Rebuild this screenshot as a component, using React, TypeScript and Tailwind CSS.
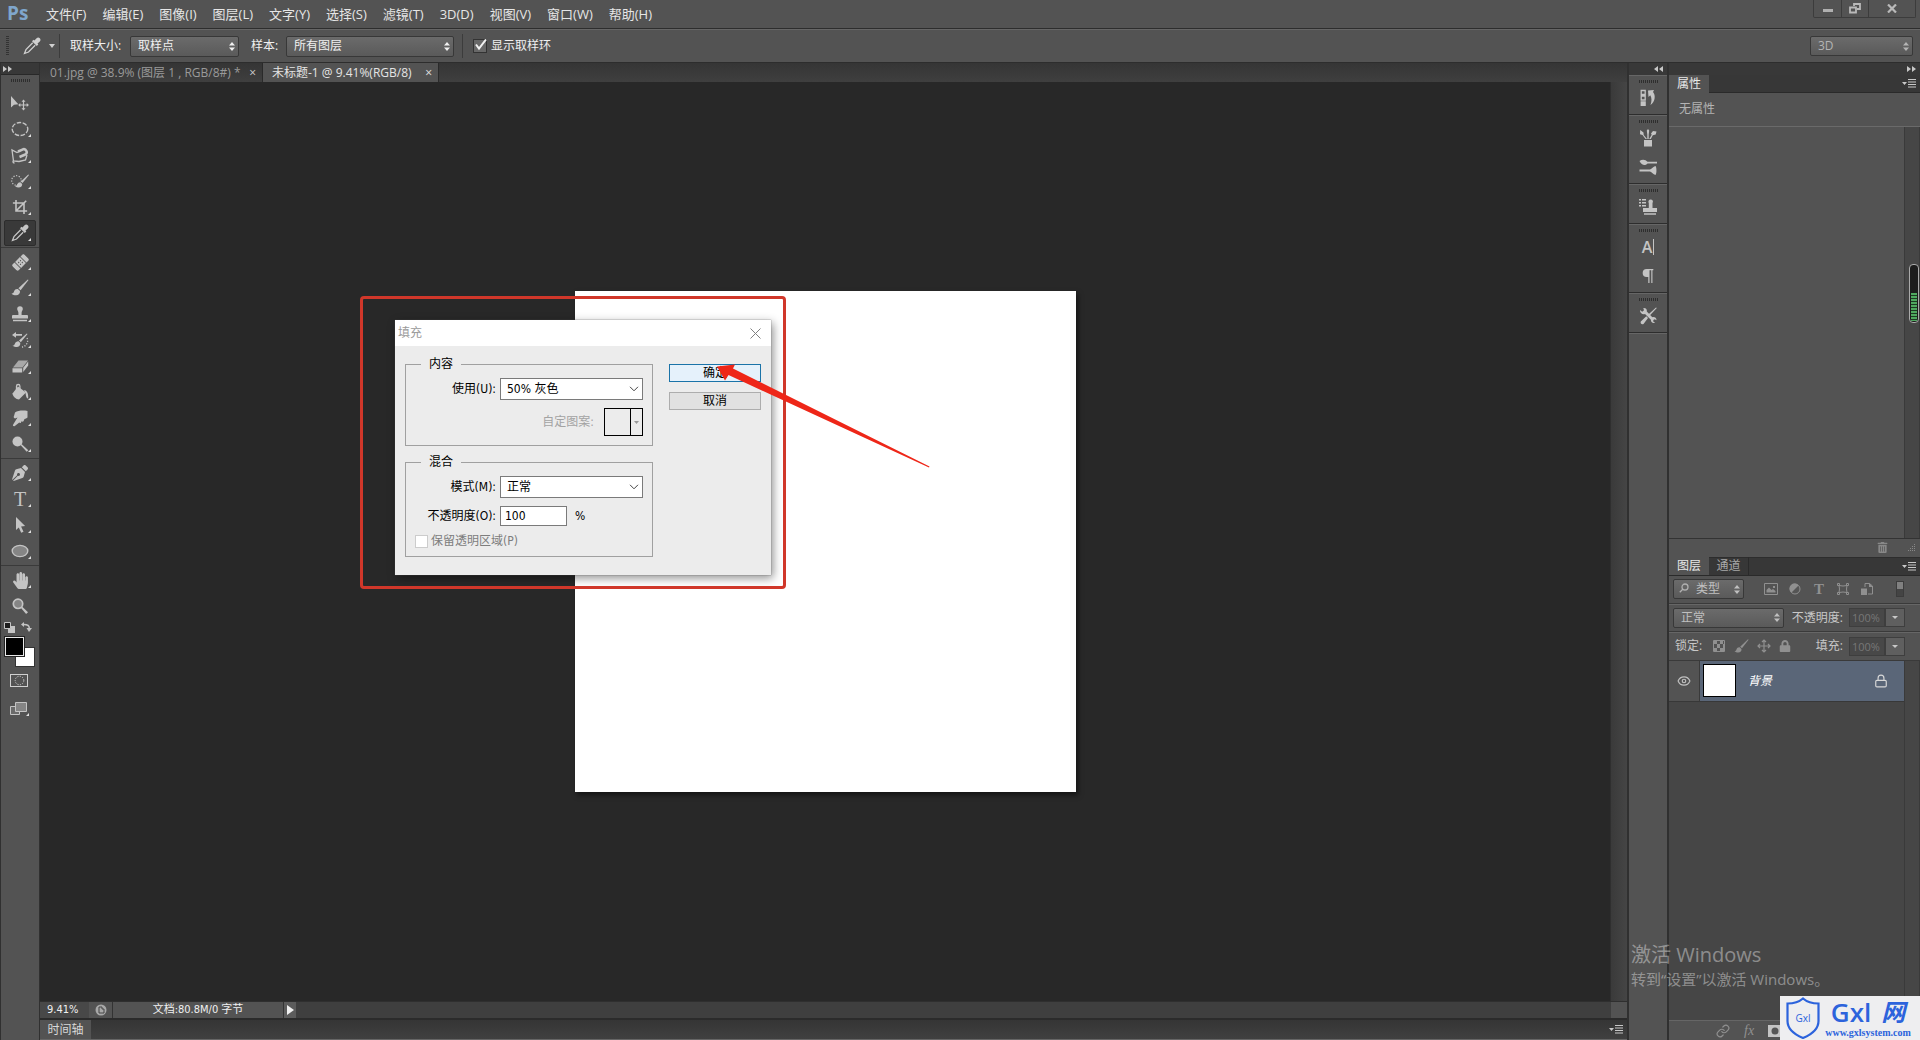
import React from "react";
import clsx from "clsx";
import { FaBandAid, FaHandPaper, FaLock, FaPenNib, FaTrashAlt } from "react-icons/fa";
import { LuEye, LuLink, LuLock } from "react-icons/lu";

const menus = [
  "文件(F)",
  "编辑(E)",
  "图像(I)",
  "图层(L)",
  "文字(Y)",
  "选择(S)",
  "滤镜(T)",
  "3D(D)",
  "视图(V)",
  "窗口(W)",
  "帮助(H)",
];

const Svg = ({ size = 18, children }: { size?: number; children: React.ReactNode }) => (
  <svg width={size} height={size} viewBox="0 0 18 18" fill="currentColor" stroke="none" aria-hidden="true">
    {children}
  </svg>
);

const BrushShape = () => (
  <>
    <path d="M17.5 1 9.6 11.2 7.4 9.3 16.8.4z" />
    <path d="M6.8 10 9 12c.3 2.6-1.500 4.300-3.800 4.300-1.900 0-3.300-.6-4.700-1.600 2-.2 2.200-1.300 2.700-2.600.6-1.500 1.900-2.500 3.600-2.100z" />
  </>
);

const StampShape = () => (
  <path d="M9 1.200a2.800 2.800 0 0 1 2.800 2.800c0 1.500-1.200 2.200-1.200 3.800V10H16a1 1 0 0 1 1 1v2.500H1V11a1 1 0 0 1 1-1h5.400V7.800C7.400 6.200 6.200 5.500 6.200 4A2.800 2.800 0 0 1 9 1.200zM2 14.800h14v1.500H2z" />
);

const DropperShape = () => (
  <>
    <path d="M16.800 1.200c1 1 .9 2.300 0 3.200l-2.300 2.200.8.900-1.500 1.500L9 4.200l1.500-1.500.9.800 2.200-2.300c.9-.9 2.200-1 3.200 0z" />
    <path d="M9.700 5.800 3 12.500 1.500 16.500 5.500 15 12.200 8.300" fill="none" stroke="currentColor" strokeWidth="1.300" />
  </>
);

const icons = {
  move: (
    <Svg>
      <path d="M0 2v11.500l3-2.700 4.300-.6z" />
      <path d="M12.500 5.500l2 2.200h-1.400v2.700h2.600V9l2.200 2-2.200 2.100v-1.500h-2.600v2.700h1.400l-2 2.200-2-2.200h1.400v-2.700H9.300v1.500L7.200 11l2.100-2v1.400h2.600V7.700h-1.400z" />
    </Svg>
  ),
  marquee: (
    <Svg>
      <ellipse cx="9" cy="9" rx="7.800" ry="6.500" fill="none" stroke="currentColor" strokeWidth="1.400" strokeDasharray="4.500 1.500" />
    </Svg>
  ),
  lasso: (
    <Svg>
      <path d="M8 15.500l-5.500-.5L1 4l5 2.500L9 5M16 9l-1.500 5-6.500 1.500" fill="none" stroke="currentColor" strokeWidth="1.300" />
      <path d="M3 14.500c-1.500.5-1.500 2.500.5 2.500" fill="none" stroke="currentColor" strokeWidth="1.300" />
      <path d="M7 5.500 12 3.300c3-1 5.300 3.700 2.300 5.200L8.500 11" fill="none" stroke="currentColor" strokeWidth="2.500" />
    </Svg>
  ),
  quick: (
    <Svg>
      <circle cx="5.500" cy="8.500" r="4.800" fill="none" stroke="currentColor" strokeWidth="1.200" strokeDasharray="1.200 1.500" />
      <path d="M18 3 11.500 11 9.800 9.500 17.300 2.400z" />
      <path d="M9.300 10.200 11.200 12c.2 2.400-1.700 3.500-3.500 3.500-1.300 0-2.500-.4-3.700-1.200 1.400-.2 1.800-1 2.300-2 .6-1.300 1.600-2.200 3-2.100z" />
    </Svg>
  ),
  crop: (
    <Svg size={16}>
      <path d="M4.500 1v12.500H17M1 4.500h12.500V17M5 13 16 2" fill="none" stroke="currentColor" strokeWidth="1.800" />
    </Svg>
  ),
  dropper: (
    <Svg>
      <DropperShape />
    </Svg>
  ),
  heal: <FaBandAid className="size-[17px] -rotate-45" />,
  brush: (
    <Svg>
      <BrushShape />
    </Svg>
  ),
  stamp: (
    <Svg>
      <StampShape />
    </Svg>
  ),
  history: (
    <Svg>
      <path d="M16.500 3 9.800 11.200 8 9.600 15.800 2.400z" />
      <path d="M7.500 10.200 9.300 12c.2 2.400-1.500 4-3.500 4-1.500 0-3-.4-4.300-1.300 1.700-.2 2-1.300 2.500-2.300.6-1.300 1.900-2.400 3.500-2.200z" />
      <path d="M1 4l4-3v2h6v1.800H5v2z" />
      <path d="M16 7c2 4-1 8.500-5 9" fill="none" stroke="currentColor" strokeWidth="1.300" strokeDasharray="1.200 1.500" />
    </Svg>
  ),
  eraser: (
    <Svg>
      <path d="M7.500 3.500h9.500l-5.500 7H2z" opacity=".75" />
      <path d="M1.500 11.300h9.700v4.200H1.500zM12.200 10.800 17.200 4.500v4l-5 6.500z" />
    </Svg>
  ),
  bucket: (
    <Svg>
      <path d="M7 3.500 15 9.500 8 16.500C5 16.500 1.500 13 1.500 10.500z" />
      <path d="M5.500 8.500V3.200a1.700 1.700 0 0 1 3.400 0V8" fill="none" stroke="currentColor" strokeWidth="1.300" />
      <path d="M13 7c3 .5 4.500 3 4.200 8.500-1.800 0-2.200-2-2.700-5.500z" />
    </Svg>
  ),
  smudge: (
    <Svg>
      <path d="M4 3.500C7 1.500 12 1 16.500 2v6.500c-1 .8-1.900 1.200-3 1.400l-1 2.400c-.7.500-1.500.5-2 0l-.6 1.400c-.7.500-1.300.3-1.600-.2L3.800 17c-1.400.6-2.400-.5-1.600-1.600L6.500 8.500 4 9.500C2.800 9.200 2.300 8 3 7z" />
    </Svg>
  ),
  dodge: (
    <Svg>
      <circle cx="6.500" cy="6.500" r="5" />
      <path d="m9.500 10 1-1 6.800 6.200-1.600 1.600z" />
    </Svg>
  ),
  pen: <FaPenNib className="size-4" />,
  type: <span className="font-['Liberation_Serif',serif] text-[20px] leading-5">T</span>,
  arrow: (
    <Svg>
      <path d="M5 1v13l2.800-2.500 2.400 5.200 2.300-1-2.400-5.200 4-.6z" />
    </Svg>
  ),
  ellipse: (
    <Svg>
      <ellipse cx="9" cy="9" rx="7.800" ry="5.600" fill="#858585" stroke="currentColor" strokeWidth="1.400" />
    </Svg>
  ),
  hand: <FaHandPaper className="size-[17px]" />,
  zoom: (
    <Svg>
      <circle cx="7" cy="6.800" r="4.700" fill="#858585" stroke="currentColor" strokeWidth="1.700" />
      <path d="m10 11 1.300-1.300 5.700 5.500-1.900 1.900z" />
    </Svg>
  ),
};

type Tool = { id: keyof typeof icons; label: string; flyout?: boolean };

const toolGroups: Tool[][] = [
  [
    { id: "move", label: "移动工具" },
    { id: "marquee", label: "椭圆选框工具", flyout: true },
    { id: "lasso", label: "磁性套索工具", flyout: true },
    { id: "quick", label: "快速选择工具", flyout: true },
    { id: "crop", label: "裁剪工具", flyout: true },
    { id: "dropper", label: "吸管工具", flyout: true },
  ],
  [
    { id: "heal", label: "污点修复画笔工具", flyout: true },
    { id: "brush", label: "画笔工具", flyout: true },
    { id: "stamp", label: "仿制图章工具", flyout: true },
    { id: "history", label: "历史记录画笔工具", flyout: true },
    { id: "eraser", label: "橡皮擦工具", flyout: true },
    { id: "bucket", label: "油漆桶工具", flyout: true },
    { id: "smudge", label: "涂抹工具", flyout: true },
    { id: "dodge", label: "减淡工具", flyout: true },
  ],
  [
    { id: "pen", label: "钢笔工具", flyout: true },
    { id: "type", label: "横排文字工具", flyout: true },
    { id: "arrow", label: "路径选择工具", flyout: true },
    { id: "ellipse", label: "椭圆工具", flyout: true },
  ],
  [
    { id: "hand", label: "抓手工具", flyout: true },
    { id: "zoom", label: "缩放工具" },
  ],
];

const dockGroups = [
  [
    {
      label: "历史记录",
      icon: (
        <Svg>
          <path d="M2.200 1.500h4v4h-4zM2.200 7h4v4h-4z" fill="none" stroke="currentColor" strokeWidth="1.300" />
          <path d="M1.600 12.200h5.200V17H1.600zM9 1.500l6-.5-1 2c3 3.500 2 10-2.500 13 1.500-4 1.200-7.500-.2-9.700L9.500 8z" />
        </Svg>
      ),
    },
  ],
  [
    {
      label: "画笔",
      icon: (
        <Svg>
          <path d="M5 11h8v6.500H5zM8.300 10V5.500L7.800 1.500 9 0l1.200 1.500-.5 4V10zM6.500 10 3.500 6 1 5.200 1.200 1l3.300 2.500L4.700 6 8 10zM10.200 10l2.500-4.300L12 4.500 14 2l3.500.5-.8 3-2.900.8L11.800 10z" />
        </Svg>
      ),
    },
    {
      label: "画笔预设",
      icon: (
        <Svg>
          <path d="M.5 3C3 1 6.500 1.200 8.500 3.700H18v1.800H8.500C6.500 8 2.500 7.500.5 3zM.5 11.500H11c2-.5 3-3 5.500-3.500 1.300 1.500 1.300 7.500 0 9-2.500-.5-3.500-3-5.500-3.500H.5z" />
        </Svg>
      ),
    },
  ],
  [
    {
      label: "仿制源",
      icon: (
        <Svg>
          <path d="M0 1h2v1.500H0zM3 1h4v1.500H3zM0 4h2v1.500H0zM3 4h4v1.500H3zM0 7h2v1.500H0zM3 7h4v1.500H3zM11.500 1.500a2.200 2.200 0 0 1 2 3.500V10H18v4H4v-4h5.800V5a2.200 2.200 0 0 1 1.700-3.500zM5 15.300h12v1.400H5z" />
        </Svg>
      ),
    },
  ],
  [
    {
      label: "字符",
      icon: (
        <span className="flex items-center gap-px">
          <span className="text-[16px] font-semibold leading-4">A</span>
          <span className="h-4 w-px bg-[#c4c4c4]" />
        </span>
      ),
    },
    {
      label: "段落",
      icon: (
        <Svg size={16}>
          <path d="M7.500 1H15v1.500h-1V17h-1.300V2.500h-2V17H9.300v-7H7.500a4.500 4.500 0 0 1 0-9z" />
        </Svg>
      ),
    },
  ],
  [
    {
      label: "工具预设",
      icon: (
        <Svg>
          <path d="M1 3l2.200 1.700L5 3.200 4.300 1c2.500-.3 4 1.300 3.500 3.500l5.500 5.700c2.300-.6 4.200.8 4.200 3l-1.700-1-1.500.8.100 1.800 1.700.9c-2.300 1-4.500-.5-4.200-2.900L6 7C3.500 7.800.7 6 1 3z" />
          <path d="M17.800 1 9.800 9.500 8.500 8.200 17 .4zM7.300 9.200l1.700 1.700-4.500 6c-1.700 1-3.500-.8-2.700-2.500z" />
        </Svg>
      ),
    },
  ],
];

const DoubleArrow = ({ left }: { left?: boolean }) => (
  <svg width="9" height="6" viewBox="0 0 9 6" fill="#c8c8c8" className={left ? "rotate-180" : ""} aria-hidden="true">
    <path d="M0 0l4 3-4 3zM5 0l4 3-4 3z" />
  </svg>
);

const UpDown = () => (
  <svg width="6" height="9" viewBox="0 0 6 9" fill="currentColor" aria-hidden="true">
    <path d="M3 0l3 3.500H0zM3 9l3-3.500H0z" />
  </svg>
);

const PanelMenu = () => (
  <button type="button" aria-label="面板菜单" className="flex items-center text-[#c8c8c8]">
    <svg width="14" height="9" viewBox="0 0 14 9" fill="currentColor" aria-hidden="true">
      <path d="M0 3h5L2.500 6zM6 0h8v1H6zM6 2.500h8v1H6zM6 5h8v1H6zM6 7.500h8v1H6z" />
    </svg>
  </button>
);

const Grip = () => (
  <div className="flex h-[3px] gap-px" aria-hidden="true">
    {Array.from({ length: 10 }, (_, i) => (
      <span key={i} className="w-px bg-[#2e2e2e]" />
    ))}
  </div>
);

type SelectProps = {
  id: string;
  label?: string;
  options: string[];
  className?: string;
  pad?: string;
};

// dark bevelled drop-down used by the options bar and the panels
const DarkSelect = ({ id, label, options, className, pad = "pl-[7px]" }: SelectProps) => (
  <div className={clsx("relative", className)}>
    <select
      id={id}
      aria-label={label}
      className={clsx(
        "h-full w-full appearance-none rounded-xs border border-[#383838] bg-linear-to-b from-[#6b6b6b] to-[#5a5a5a] pr-4 text-[12px] leading-4 outline-none",
        pad
      )}
    >
      {options.map((o) => (
        <option key={o}>{o}</option>
      ))}
    </select>
    <span className="pointer-events-none absolute inset-y-0 right-1 flex items-center">
      <UpDown />
    </span>
  </div>
);

const LightSelect = ({ id, options }: SelectProps) => (
  <div className="relative h-[22px] w-[143px]">
    <select
      id={id}
      className="h-full w-full appearance-none border border-[#7a7a7a] bg-white pl-1.5 pr-5 text-[12px] leading-4 text-black outline-none"
    >
      {options.map((o) => (
        <option key={o}>{o}</option>
      ))}
    </select>
    <svg
      width="10"
      height="6"
      viewBox="0 0 10 6"
      fill="none"
      stroke="#444"
      className="pointer-events-none absolute right-1 top-2"
      aria-hidden="true"
    >
      <path d="M1 .8l4 4 4-4" />
    </svg>
  </div>
);

const MenuBar = () => (
  <header className="flex h-[29px] shrink-0 items-start border-b border-[#2d2d2d] bg-[#535353]">
    <span className="w-[38px] pl-[7px] text-[19px] font-bold leading-[26px] text-[#7fa6cc]">Ps</span>
    <nav className="flex">
      {menus.map((m) => (
        <button key={m} type="button" className="px-2 text-[13px] leading-7 text-[#e6e6e6]">
          {m}
        </button>
      ))}
    </nav>
    <div className="ml-auto mr-1 flex h-[18px] divide-x divide-[#3c3c3c] rounded-b-xs border border-t-0 border-[#3c3c3c] text-[#b9b9b9]">
      <button type="button" aria-label="最小化" className="flex w-7 items-center justify-center">
        <span className="mt-1 h-[3px] w-2.5 bg-[#b0b0b0]" />
      </button>
      <button type="button" aria-label="还原" className="flex w-[27px] items-center justify-center">
        <svg width="12" height="11" viewBox="0 0 12 11" fill="none" stroke="currentColor" strokeWidth="1.800" aria-hidden="true">
          <path d="M5 3V1h6v5H8M1 4.500h6v5H1z" />
        </svg>
      </button>
      <button type="button" aria-label="关闭" className="flex w-[46px] items-center justify-center">
        <svg width="10" height="9" viewBox="0 0 10 9" fill="none" stroke="currentColor" strokeWidth="2.200" aria-hidden="true">
          <path d="M1 .5l8 8M9 .5l-8 8" />
        </svg>
      </button>
    </div>
  </header>
);

const OptionsBar = () => (
  <div className="flex h-[34px] shrink-0 items-center border-b border-t border-b-[#2d2d2d] border-t-[#666] bg-[#535353] text-[12px] text-[#f0f0f0]">
    <div className="ml-1.5 h-5 w-[3px] bg-[repeating-linear-gradient(#333_0_1px,transparent_1px_2px)]" />
    <button type="button" aria-label="吸管工具" className="ml-3.5 flex w-9 items-center gap-2 text-[#d0d0d0]">
      <Svg>
        <DropperShape />
      </Svg>
      <svg width="6" height="4" viewBox="0 0 6 4" fill="currentColor" aria-hidden="true">
        <path d="M0 0h6L3 4z" />
      </svg>
    </button>
    <div className="h-6 w-px bg-[#3c3c3c]" />
    <label htmlFor="sample-size" className="ml-2.5 w-[60px]">
      取样大小:
    </label>
    <DarkSelect id="sample-size" options={["取样点", "3 x 3 平均"]} className="h-[21px] w-[109px]" />
    <label htmlFor="sample-layers" className="ml-3 w-[35px]">
      样本:
    </label>
    <DarkSelect id="sample-layers" options={["所有图层", "当前图层"]} className="h-[21px] w-[168px]" />
    <div className="ml-2 h-6 w-px bg-[#3c3c3c]" />
    <label className="ml-2.5 flex items-center gap-1">
      <span className="relative size-3.5">
        <input
          type="checkbox"
          defaultChecked
          className="peer block size-3.5 appearance-none border border-[#333] bg-[#686868]"
        />
        <svg
          width="14"
          height="14"
          viewBox="0 0 14 14"
          fill="none"
          stroke="#f2f2f2"
          strokeWidth="2"
          className="pointer-events-none absolute inset-0 hidden peer-checked:block"
          aria-hidden="true"
        >
          <path d="M3 5.500 6 9.500 13 .5" />
        </svg>
      </span>
      显示取样环
    </label>
    <DarkSelect
      id="workspace"
      label="工作区"
      options={["3D", "基本功能"]}
      className="ml-auto mr-[7px] h-5 w-[103px] text-[#b4b4b4]"
    />
  </div>
);

const ToolBar = () => (
  <aside className="w-10 shrink-0 border-x border-[#303030] bg-[#535353] text-[#c4c4c4]">
    <div className="flex h-3 items-center border-b border-[#282828] bg-[#383838] pl-0.5">
      <DoubleArrow />
    </div>
    <div className="flex h-[15px] items-start justify-center pt-1">
      <Grip />
    </div>
    {toolGroups.map((group, i) => (
      <div key={i} className={clsx("flex flex-col items-center", i > 0 && "mt-px border-t border-[#3a3a3a] pt-px")}>
        {group.map((t) => (
          <button
            key={t.id}
            type="button"
            aria-label={t.label}
            className={clsx(
              "relative flex h-[26px] w-8 items-center justify-center border",
              t.id === "dropper" ? "rounded-xs border-[#2c2c2c] bg-[#393939]" : "border-transparent"
            )}
          >
            {icons[t.id]}
            {t.flyout && (
              <svg width="3" height="3" viewBox="0 0 3 3" fill="#e0e0e0" className="absolute bottom-1 right-1" aria-hidden="true">
                <path d="M3 0v3H0z" />
              </svg>
            )}
          </button>
        ))}
      </div>
    ))}
    <div className="flex h-4 items-center gap-1.5 pl-[3px]">
      <button type="button" aria-label="默认颜色">
        <svg width="11" height="11" viewBox="0 0 11 11" aria-hidden="true">
          <path d="M4 4h7v7H4z" fill="#c4c4c4" />
          <path d="M.5.5h6v6h-6z" fill="#1c1c1c" stroke="#c4c4c4" />
        </svg>
      </button>
      <button type="button" aria-label="切换颜色">
        <svg width="12" height="10" viewBox="0 0 12 10" fill="currentColor" aria-hidden="true">
          <path d="M3 0v1.800c4 0 6 1.500 6 4.200h2L8 10 5.500 6H7.500C7.500 4.300 6 3.300 3 3.300V5L0 2.500z" />
        </svg>
      </button>
    </div>
    <div className="relative mt-0.5 h-[29px]">
      <button type="button" aria-label="背景色" className="absolute left-3.5 top-2.5 size-5 border border-[#333] bg-white" />
      <button type="button" aria-label="前景色" className="absolute left-1 top-0 size-[19px] border border-[#e8e8e8] bg-black outline-1 outline-[#222]" />
    </div>
    <div className="flex flex-col items-center pr-0.5">
      <button type="button" aria-label="快速蒙版" className="mt-2 flex h-[13px] w-[18px] items-center justify-center border border-[#d0d0d0]">
        <svg width="11" height="11" viewBox="0 0 11 11" fill="none" stroke="#d0d0d0" strokeDasharray="1.200 1.300" aria-hidden="true">
          <circle cx="5.500" cy="5.500" r="4.300" />
        </svg>
      </button>
      <button type="button" aria-label="屏幕模式" className="relative mt-3.5">
        <svg width="20" height="15" viewBox="0 0 20 15" stroke="#c4c4c4" fill="#6a6a6a" aria-hidden="true">
          <path d="M1.500 5.500h9v8h-9z" />
          <path d="M6.500 1.500h11v9h-11z" fill="#858585" />
          <path d="M20 12v3h-3z" fill="#e0e0e0" stroke="none" />
        </svg>
      </button>
    </div>
  </aside>
);

const FillDialog = () => (
  <div
    role="dialog"
    aria-labelledby="fill-title"
    className="absolute left-[355px] top-[238px] w-[376px] bg-[#ececec] font-['DejaVu_Sans_Condensed','Noto_Sans_CJK_SC',sans-serif] text-[12px] leading-4 text-black shadow-[0_0_1px_#555,2px_3px_9px_rgba(0,0,0,0.45)]"
  >
    <div className="flex h-[26px] items-center justify-between bg-white pl-[3px] pr-2.5">
      <h2 id="fill-title" className="text-[#9a9a9a]">
        填充
      </h2>
      <button type="button" aria-label="关闭">
        <svg width="11" height="11" viewBox="0 0 11 11" stroke="#808080" aria-hidden="true">
          <path d="M.5.5l10 10M10.500.5l-10 10" />
        </svg>
      </button>
    </div>
    <form className="flex gap-4 px-2.5 pb-[18px] pt-2.5" onSubmit={(e) => e.preventDefault()}>
      <div className="flex w-[248px] flex-col gap-2">
        <fieldset className="border border-[#a0a0a0] pb-[9px]">
          <legend className="ml-[15px] px-2">内容</legend>
          <div className="flex items-center gap-1 pt-1.5">
            <label htmlFor="fill-use" className="w-[90px] text-right">
              使用(U):
            </label>
            <LightSelect id="fill-use" options={["50% 灰色", "前景色", "背景色"]} />
          </div>
          <div className="mt-2 flex items-center justify-end gap-2.5 pr-[9px] text-[#a3a3a3]">
            <span id="pattern-label">自定图案:</span>
            <button
              type="button"
              disabled
              aria-labelledby="pattern-label"
              className="flex h-7 w-[39px] justify-end border border-black"
            >
              <span className="flex h-full w-3 items-center justify-center border-l border-black">
                <svg width="5" height="3" viewBox="0 0 5 3" fill="#999" aria-hidden="true">
                  <path d="M0 0h5L2.500 3z" />
                </svg>
              </span>
            </button>
          </div>
        </fieldset>
        <fieldset className="border border-[#a0a0a0] pb-[7px]">
          <legend className="ml-[15px] px-2">混合</legend>
          <div className="flex items-center gap-1 pt-1.5">
            <label htmlFor="fill-mode" className="w-[90px] text-right">
              模式(M):
            </label>
            <LightSelect id="fill-mode" options={["正常", "溶解"]} />
          </div>
          <div className="mt-2 flex items-center gap-1">
            <label htmlFor="fill-opacity" className="w-[90px] text-right">
              不透明度(O):
            </label>
            <input
              id="fill-opacity"
              defaultValue="100"
              className="h-5 w-[67px] border border-[#7a7a7a] bg-white pl-1 outline-none"
            />
            <span className="pl-1">%</span>
          </div>
          <label className="ml-[9px] mt-[7px] flex items-center gap-[3px] text-[#7d7d7d]">
            <input type="checkbox" disabled className="size-[13px] appearance-none border border-[#ccc] bg-white" />
            保留透明区域(P)
          </label>
        </fieldset>
      </div>
      <div className="flex w-[92px] flex-col gap-2.5 pt-2">
        <button type="submit" className="h-[18px] border border-[#1a73a8] bg-[#e5f1fb]">
          确定
        </button>
        <button type="button" className="h-[18px] border border-[#adadad] bg-[#e1e1e1]">
          取消
        </button>
      </div>
    </form>
  </div>
);

const Workspace = () => (
  <main className="flex min-w-0 flex-1 flex-col">
    <div className="flex h-[19px] shrink-0 bg-linear-to-b from-[#353535] to-[#3f3f3f] text-[12px] leading-5">
      <div className="flex w-[223px] items-center justify-between whitespace-nowrap border-r border-[#2a2a2a] pl-2.5 pr-1.5 text-[#9a9a9a]">
        <button type="button">01.jpg @ 38.9% (图层 1 , RGB/8#) *</button>
        <button type="button" aria-label="关闭 01.jpg" className="text-[#d0d0d0]">
          ×
        </button>
      </div>
      <div className="flex w-[176px] items-center justify-between whitespace-nowrap border-r border-[#2a2a2a] bg-[#535353] pl-[9px] pr-1.5 text-[#e4e4e4]">
        <button type="button">未标题-1 @ 9.41%(RGB/8)</button>
        <button type="button" aria-label="关闭 未标题-1">
          ×
        </button>
      </div>
    </div>
    <div className="flex min-h-0 flex-1">
      <div className="relative flex min-w-0 flex-1 items-center justify-center overflow-hidden bg-[#282828]">
        <div className="aspect-square w-[501px] bg-white shadow-[2px_3px_5px_rgba(0,0,0,0.5)]" />
        <FillDialog />
        <div className="pointer-events-none absolute left-80 top-[214px] h-[293px] w-[426px] rounded-sm border-3 border-[#d0372a]" />
        <svg
          width="214"
          height="104"
          viewBox="0 0 214 104"
          fill="#ee2618"
          className="pointer-events-none absolute left-[677px] top-[282px]"
          aria-hidden="true"
        >
          <path d="M0 2.500 18 .6 16 4.500 212.500 102.500 212 103.500 11.500 11 8 16.500z" />
        </svg>
      </div>
      <div className="w-[17px] border-l border-[#2f2f2f] bg-linear-to-r from-[#3a3a3a] to-[#454545]" />
    </div>
    <div className="flex h-[17px] shrink-0 border-t border-[#2f2f2f] bg-[#3f3f3f] font-['DejaVu_Sans_Condensed','Noto_Sans_CJK_SC',sans-serif] text-[11px] leading-4 text-[#f0f0f0]">
      <span className="w-[49px] bg-[#484848] pl-[7px]">9.41%</span>
      <span className="flex w-6 items-center justify-center border-r border-[#333] bg-[#535353]">
        <svg width="12" height="12" viewBox="0 0 12 12" aria-hidden="true">
          <circle cx="6" cy="6" r="5.500" fill="#a8a8a8" />
          <path d="M4 3h3v2h2v4H4z" fill="none" stroke="#444" />
        </svg>
      </span>
      <span className="w-[171px] border-r border-[#333] bg-[#535353] text-center">文档:80.8M/0 字节</span>
      <button type="button" aria-label="文档信息" className="flex w-3 items-center justify-center bg-[#5c5c5c]">
        <svg width="7" height="10" viewBox="0 0 7 10" fill="#f0f0f0" aria-hidden="true">
          <path d="M0 0l7 5-7 5z" />
        </svg>
      </button>
      <span className="ml-auto w-4 bg-[#535353]" />
    </div>
    <div className="mt-0.5 flex h-5 shrink-0 items-center justify-between border-b border-[#666] bg-linear-to-b from-[#353535] to-[#404040] pr-1">
      <button type="button" className="h-full w-[51px] bg-[#535353] text-[12px] leading-4 text-[#d8d8d8]">
        时间轴
      </button>
      <PanelMenu />
    </div>
  </main>
);

const Dock = () => (
  <aside className="flex w-[42px] shrink-0 flex-col border-x-2 border-[#303030] bg-[#535353] text-[#c4c4c4]">
    <div className="flex h-3 items-center justify-end bg-[#383838] pr-1">
      <DoubleArrow left />
    </div>
    {dockGroups.map((group, i) => (
      <div key={i} className="flex flex-col items-center border-b border-t border-b-[#2d2d2d] border-t-[#666] pb-0.5 pt-1">
        <Grip />
        {group.map((d) => (
          <button key={d.label} type="button" aria-label={d.label} className="flex h-[29px] items-center justify-center">
            {d.icon}
          </button>
        ))}
      </div>
    ))}
    <div className="flex-1 border-t border-[#666]" />
  </aside>
);

const LayerValue = ({ id, label }: { id: string; label: string }) => (
  <div className="ml-auto flex items-center">
    <label htmlFor={id} className="pr-1.5 text-[#c8c8c8]">
      {label}
    </label>
    <input
      id={id}
      defaultValue="100%"
      disabled
      className="h-[19px] w-9 border border-[#3e3e3e] bg-[#484848] pl-0.5 text-[11px] text-[#777]"
    />
    <button
      type="button"
      aria-label={label}
      className="flex h-[19px] w-5 items-center justify-center border border-[#3e3e3e] bg-[#5f5f5f] text-[#c8c8c8]"
    >
      <svg width="6" height="3" viewBox="0 0 6 3" fill="currentColor" aria-hidden="true">
        <path d="M0 0h6L3 3z" />
      </svg>
    </button>
  </div>
);

const Panels = () => (
  <aside className="flex w-[251px] shrink-0 flex-col bg-[#535353] text-[12px] leading-4">
    <div className="flex h-3 shrink-0 items-center justify-end bg-[#383838] pr-1">
      <DoubleArrow />
    </div>
    <section className="flex min-h-0 flex-1 flex-col">
      <div className="flex h-[18px] shrink-0 items-center justify-between border-b border-[#2a2a2a] bg-[#373737] pr-1">
        <button type="button" className="h-[18px] w-10 bg-[#535353] text-[#e8e8e8]">
          属性
        </button>
        <PanelMenu />
      </div>
      <p className="h-[34px] shrink-0 border-b border-[#6a6a6a] pl-2.5 pt-2 text-[#b4b4b4]">无属性</p>
      <div className="flex flex-1 justify-end">
        <div className="w-4 border-x border-[#3a3a3a] bg-[#464646]" />
      </div>
      <div className="flex h-5 shrink-0 items-center justify-end gap-5 border-b border-t border-b-[#2d2d2d] border-t-[#333] pr-1 text-[#888]">
        <FaTrashAlt className="size-[11px]" />
        <svg width="8" height="8" viewBox="0 0 8 8" fill="currentColor" aria-hidden="true">
          <path d="M6 0h1v1H6zM4 2h1v1H4zM6 2h1v1H6zM2 4h1v1H2zM4 4h1v1H4zM6 4h1v1H6zM0 6h1v1H0zM2 6h1v1H2zM4 6h1v1H4zM6 6h1v1H6z" />
        </svg>
      </div>
    </section>
    <section className="flex min-h-0 flex-1 flex-col">
      <div className="flex h-[18px] shrink-0 items-center border-b border-[#2a2a2a] bg-[#373737] pr-1">
        <button type="button" className="h-[18px] w-10 bg-[#535353] text-[#e8e8e8]">
          图层
        </button>
        <button type="button" className="h-[18px] w-10 border-r border-[#2a2a2a] text-[#a8a8a8]">
          通道
        </button>
        <span className="ml-auto flex">
          <PanelMenu />
        </span>
      </div>
      <div className="flex h-7 shrink-0 items-center border-b border-[#3a3a3a] pl-1 pr-4 text-[#909090]">
        <div className="relative">
          <DarkSelect
            id="layer-filter"
            label="图层过滤"
            options={["类型", "名称"]}
            pad="pl-[22px]"
            className="h-5 w-[71px] text-[#c0c0c0]"
          />
          <svg
            width="10"
            height="10"
            viewBox="0 0 10 10"
            fill="none"
            stroke="#b0b0b0"
            strokeWidth="1.300"
            className="pointer-events-none absolute left-1.5 top-1"
            aria-hidden="true"
          >
            <circle cx="6" cy="4" r="3" />
            <path d="M4 6 .8 9.200" />
          </svg>
        </div>
        <div className="ml-5 flex items-center gap-2.5">
          <svg width="14" height="12" viewBox="0 0 14 12" fill="currentColor" aria-hidden="true">
            <path d="M.5.5h13v11H.5z" fill="none" stroke="currentColor" />
            <path d="M2.500 9.500V7L5 4.500 7.500 7 9 6l2.500 2v1.500zM9 3h2v2H9z" />
          </svg>
          <svg width="14" height="12" viewBox="0 0 14 12" aria-hidden="true">
            <circle cx="7" cy="6" r="5" fill="#555" stroke="currentColor" />
            <path d="M10.500 2.500A5 5 0 1 0 3.500 9.500z" fill="currentColor" />
          </svg>
          <span className="w-3.5 text-center font-['Liberation_Serif',serif] text-[15px] font-bold">T</span>
          <svg width="14" height="12" viewBox="0 0 14 12" fill="none" stroke="currentColor" aria-hidden="true">
            <path d="M3 2.500q4 1 8 0-1 3.500 0 7-4-1-8 0 1-3.500 0-7zM1.500.5h2v2h-2zM10.500.5h2v2h-2zM1.500 9.500h2v2h-2zM10.500 9.500h2v2h-2z" />
          </svg>
          <svg width="14" height="12" viewBox="0 0 14 12" fill="currentColor" aria-hidden="true">
            <path d="M5 4V.5h4.500L12.500 3v8H8" fill="none" stroke="currentColor" />
            <path d="M1 5.500h6V12H1zM9 0v4h4z" />
          </svg>
        </div>
        <span className="ml-auto h-4 w-2 border border-[#3c3c3c] bg-linear-to-b from-[#808080] from-50% to-[#444] to-50%" />
      </div>
      <div className="flex h-7 shrink-0 items-center border-b border-t border-b-[#3a3a3a] border-t-[#666] pl-1 pr-[15px]">
        <DarkSelect
          id="blend-mode"
          label="混合模式"
          options={["正常", "溶解"]}
          className="h-5 w-[111px] text-[#c0c0c0]"
        />
        <LayerValue id="layer-opacity" label="不透明度:" />
      </div>
      <div className="flex h-[29px] shrink-0 items-center border-b border-t border-b-[#3a3a3a] border-t-[#666] pl-1.5 pr-[15px] text-[#909090]">
        <span className="w-[37px] text-[#c8c8c8]">锁定:</span>
        <div className="flex items-center gap-2">
          <svg width="14" height="12" viewBox="0 0 14 12" fill="currentColor" aria-hidden="true">
            <path d="M1.500.5h11v11h-11z" fill="none" stroke="currentColor" />
            <path d="M2 1h3v3H2zM8 1h3v3H8zM5 4h3v4H5zM2 8h3v3H2zM8 8h4v3H8zM11 4h2v4h-2z" />
          </svg>
          <Svg size={15}>
            <BrushShape />
          </Svg>
          <svg width="14" height="14" viewBox="0 0 14 14" fill="none" stroke="currentColor" strokeWidth="1.200" aria-hidden="true">
            <path d="M7 1v12M1 7h12M5 3l2-2 2 2M5 11l2 2 2-2M3 5 1 7l2 2M11 5l2 2-2 2" />
          </svg>
          <FaLock className="size-3" />
        </div>
        <LayerValue id="layer-fill" label="填充:" />
      </div>
      <div className="flex min-h-0 flex-1 bg-[#464646]">
        <div className="flex-1">
          <div className="flex h-[41px] items-stretch border-b border-[#383838] bg-[#535353]">
            <button type="button" aria-label="显示图层" className="flex w-[31px] items-center justify-center border-r border-[#3a3a3a] text-[#c0c0c0]">
              <LuEye className="size-3.5" />
            </button>
            <div className="flex flex-1 items-center bg-[#5a6678] pl-[3px] pr-4">
              <span className="size-[33px] border border-black bg-white" />
              <span className="ml-3 text-[12px] italic text-white">背景</span>
              <LuLock className="ml-auto size-3.5 text-[#d8d8d8]" />
            </div>
          </div>
        </div>
        <div className="w-4 border-x border-[#3a3a3a] bg-[#464646]" />
      </div>
      <div className="flex h-5 shrink-0 items-center border-t border-[#666] pl-[47px] text-[#909090]">
        <LuLink className="size-3.5" />
        <span className="ml-3.5 font-['Liberation_Serif',serif] text-[14px] italic">fx</span>
        <svg width="16" height="12" viewBox="0 0 16 12" className="ml-3.5" aria-hidden="true">
          <path d="M0 0h16v12H0z" fill="#c4c4c4" />
          <circle cx="7" cy="6" r="3.500" fill="#555" />
        </svg>
      </div>
    </section>
  </aside>
);

const App = () => {
  return (
    <div className="relative flex h-screen flex-col overflow-hidden bg-[#2b2b2b] font-['Open_Sans','Noto_Sans_CJK_SC',sans-serif]">
      <MenuBar />
      <OptionsBar />
      <div className="flex min-h-0 flex-1">
        <ToolBar />
        <Workspace />
        <Dock />
        <Panels />
      </div>

      {/* memory meter on the right edge */}
      <div className="absolute right-px top-[264px] flex h-[59px] w-2.5 items-end rounded-sm border border-[#aaa] bg-[#1c1c1c] p-px">
        <div className="h-7 w-full bg-[repeating-linear-gradient(#4fa85f_0_2px,#1c3a22_2px_3px)]" />
      </div>

      <div className="pointer-events-none absolute bottom-[51px] right-[92px] w-[197px] whitespace-nowrap text-white/40">
        <p className="text-[20px] leading-7">激活 Windows</p>
        <p className="text-[15px] leading-5">转到“设置”以激活 Windows。</p>
      </div>

      <div className="absolute bottom-0 right-0 flex h-11 w-[140px] items-center bg-[#eeeef0] pl-1.5 text-[#2c63dc]">
        <svg width="34" height="42" viewBox="0 0 34 42" fill="none" stroke="currentColor" strokeWidth="2.200" aria-hidden="true">
          <path d="M17 1.500C13 5 7 6.500 1.500 6.500V24c0 8 7 13.500 15.500 17 8.500-3.500 15.500-9 15.500-17V6.500C27 6.500 21 5 17 1.500z" />
          <text x="17" y="25" textAnchor="middle" fontSize="10" fill="currentColor" stroke="none">
            Gxl
          </text>
        </svg>
        <div className="flex flex-1 flex-col items-center pr-1">
          <div className="flex items-center gap-2.5 font-semibold">
            <span className="text-[26px] leading-[30px]">Gxl</span>
            <span className="text-[24px] italic leading-[30px]">网</span>
          </div>
          <span className="font-['Liberation_Serif',serif] text-[10px] font-bold leading-3">www.gxlsystem.com</span>
        </div>
      </div>
    </div>
  );
};

export default App;
